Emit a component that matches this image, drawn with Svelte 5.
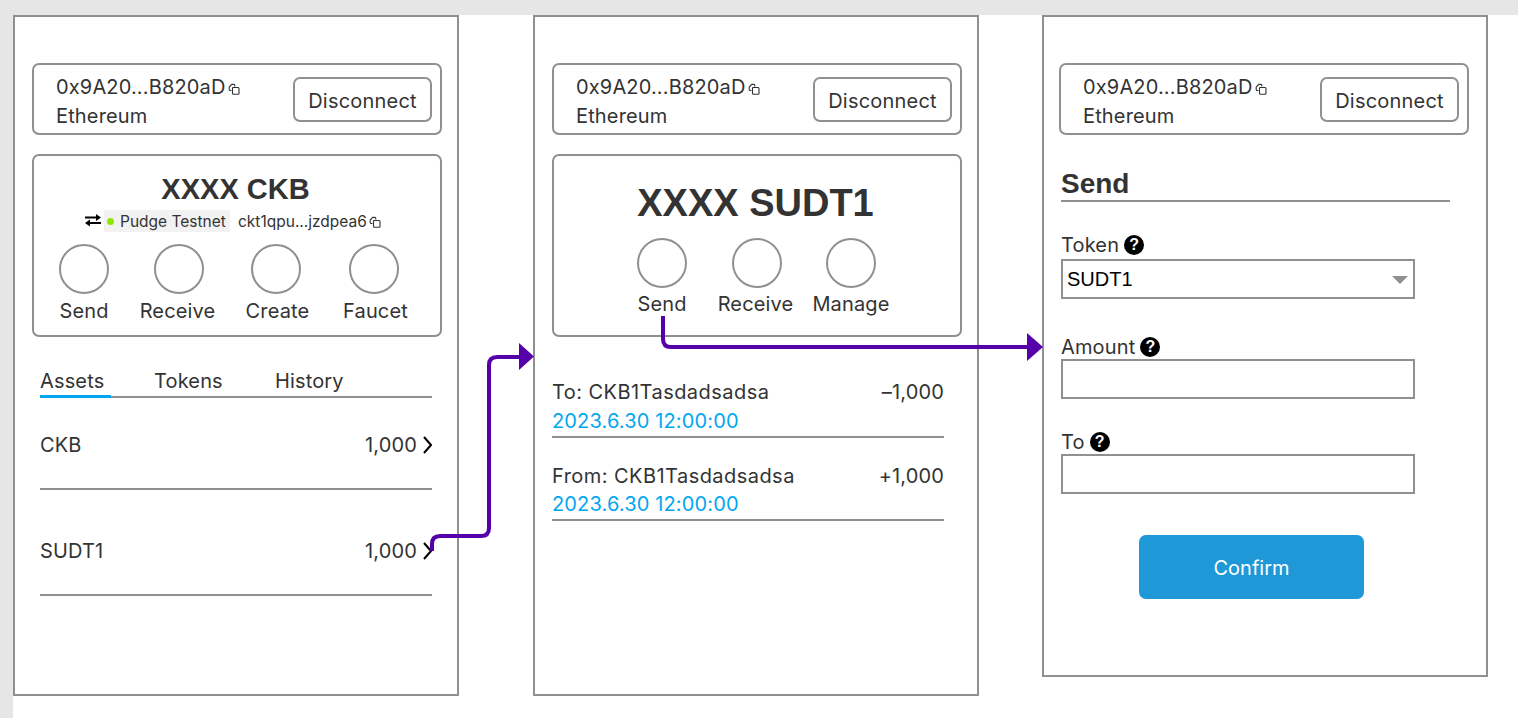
<script>
	const mainActions = ['Send', 'Receive', 'Create', 'Faucet'];
	const tokenActions = ['Send', 'Receive', 'Manage'];
	const tabs = ['Assets', 'Tokens', 'History'];
	const assets = [
		{ name: 'CKB', amount: '1,000' },
		{ name: 'SUDT1', amount: '1,000' }
	];
	const history = [
		{ who: 'To: CKB1Tasdadsadsa', amount: '–1,000', date: '2023.6.30 12:00:00' },
		{ who: 'From: CKB1Tasdadsadsa', amount: '+1,000', date: '2023.6.30 12:00:00' }
	];
</script>

{#snippet copyIcon()}
	<svg class="copy" viewBox="0 0 12 12" width="12" height="12" fill="none" stroke="#333" stroke-width="1.1">
		<path d="M3.5 7.5H2.2a1 1 0 0 1-1-1V4l2.6-2.6h2a1 1 0 0 1 1 1v1.2" />
		<path d="M5 4.500h5a1 1 0 0 1 1 1v4.700a1 1 0 0 1-1 1H5.500a1 1 0 0 1-1-1V5z" />
	</svg>
{/snippet}

{#snippet wallet()}
	<div class="wallet">
		<div class="address">
			<div class="line">0x9A20...B820aD{@render copyIcon()}</div>
			<div class="line">Ethereum</div>
		</div>
		<button class="disconnect">Disconnect</button>
	</div>
{/snippet}

{#snippet help()}
	<span class="help">?</span>
{/snippet}

<div class="board">
	<section class="panel">
		{@render wallet()}
		<div class="card">
			<h2 class="balance">XXXX CKB</h2>
			<div class="network">
				<svg class="swap" viewBox="0 0 16 16" width="16" height="16" fill="#000">
					<path d="M0 3.500h11V1l5 3.500-5 3.500V5.500H0z" />
					<path d="M16 9H5V6.500L0 10l5 3.500V11h11z" />
				</svg>
				<span class="pill"><i class="dot"></i>Pudge Testnet</span>
				<span class="ckb-address">ckt1qpu...jzdpea6{@render copyIcon()}</span>
			</div>
			<div class="actions four">
				{#each mainActions as action}
					<div class="action"><span class="circle"></span><span class="action-label">{action}</span></div>
				{/each}
			</div>
		</div>
		<div class="tabs">
			{#each tabs as tab, i}
				<span class="tab" class:active={i === 0}>{tab}</span>
			{/each}
		</div>
		{#each assets as asset}
			<div class="asset">
				<span>{asset.name}</span>
				<span class="amount">
					{asset.amount}
					<svg viewBox="0 0 9 18" width="9" height="18" fill="none" stroke="#000" stroke-width="2"><path d="M1 1l7 8-7 8" /></svg>
				</span>
			</div>
		{/each}
	</section>

	<section class="panel second">
		{@render wallet()}
		<div class="card">
			<h2 class="balance large">XXXX SUDT1</h2>
			<div class="actions three">
				{#each tokenActions as action}
					<div class="action"><span class="circle"></span><span class="action-label">{action}</span></div>
				{/each}
			</div>
		</div>
		<div class="history">
			{#each history as item}
				<div class="record">
					<div class="record-top"><span class="who">{item.who}</span><span>{item.amount}</span></div>
					<div class="date">{item.date}</div>
				</div>
			{/each}
		</div>
	</section>

	<section class="panel third">
		{@render wallet()}
		<form class="send">
			<h2 class="send-title">Send</h2>
			<div class="field first">
				<span class="label">Token {@render help()}</span>
				<div class="select-wrap">
					<select class="box">
						<option>SUDT1</option>
					</select>
				</div>
			</div>
			<div class="field amount-field">
				<span class="label">Amount {@render help()}</span>
				<input class="box" />
			</div>
			<div class="field">
				<span class="label">To {@render help()}</span>
				<input class="box" />
			</div>
			<button type="button" class="confirm">Confirm</button>
		</form>
	</section>

	<svg class="arrows" width="1518" height="718" fill="none" stroke="#5500a8" stroke-width="4">
		<path d="M432 551v-7q0-8 8-8h41q8 0 8-8V365q0-8 8-8h24" />
		<path d="M519 343l15 13.500-15 13.500z" fill="#5500a8" stroke="none" />
		<path d="M663 316v23q0 8 8 8h358" />
		<path d="M1027 333l16 14-16 14z" fill="#5500a8" stroke="none" />
	</svg>
</div>

<style>
	:global(body) {
		background: #fff;
	}

	.board {
		position: relative;
		box-sizing: border-box;
		display: flex;
		align-items: flex-start;
		width: 1518px;
		height: 718px;
		overflow: hidden;
		border-top: 15px solid #e6e6e6;
		border-left: 13px solid #e6e6e6;
		font-family: Inter, 'Liberation Sans', sans-serif;
		font-size: 20px;
		letter-spacing: 0.15px;
		color: #333;
	}

	.panel {
		box-sizing: border-box;
		flex: none;
		width: 446px;
		height: 681px;
		padding: 46px 15px 0 17px;
		border: 2px solid #909090;
		background: #fff;
	}

	.second {
		margin-left: 74px;
	}

	.third {
		margin-left: 63px;
		height: 662px;
		padding-left: 15px;
		padding-right: 17px;
	}

	.wallet {
		box-sizing: border-box;
		display: flex;
		justify-content: space-between;
		align-items: center;
		height: 72px;
		padding: 0 8px 0 22px;
		border: 2px solid #909090;
		border-radius: 7px;
	}

	.address {
		padding-top: 6px;
	}

	.line {
		line-height: 29px;
	}

	.copy {
		margin-left: 2px;
		vertical-align: -1px;
	}

	.disconnect {
		width: 139px;
		height: 45px;
		padding: 4px 0 0;
		border: 2px solid #909090;
		border-radius: 7px;
		background: #fff;
		font: inherit;
		letter-spacing: 0.2px;
		color: #333;
	}

	.card {
		box-sizing: border-box;
		height: 183px;
		margin-top: 19px;
		border: 2px solid #909090;
		border-radius: 7px;
		text-align: center;
	}

	.balance {
		margin: 16px 3px 0 0;
		font-family: 'Liberation Sans', sans-serif;
		font-size: 29px;
		line-height: 34px;
		font-weight: 700;
		letter-spacing: 0;
	}

	.balance.large {
		margin-top: 25px;
		margin-right: 3px;
		font-size: 38px;
		line-height: 44px;
	}

	.network {
		display: flex;
		align-items: center;
		height: 22px;
		margin: 4px 0 0 51px;
		font-size: 15.500px;
		letter-spacing: 0;
	}

	.swap {
		margin-right: 3px;
	}

	.pill {
		display: flex;
		align-items: center;
		box-sizing: border-box;
		width: 126px;
		height: 22px;
		padding-left: 3px;
		background: #f2f2f2;
		white-space: nowrap;
	}

	.dot {
		width: 7px;
		height: 7px;
		margin-right: 6px;
		border-radius: 50%;
		background: #8fe800;
	}

	.ckb-address {
		margin-left: 8px;
		white-space: nowrap;
	}

	.actions {
		display: grid;
		margin-top: 12px;
	}

	.four {
		grid-template-columns: 98px 91px 104px 92px;
		margin-left: 1px;
	}

	.four .action:nth-child(2) .action-label {
		margin-right: 2px;
	}

	.four .action:nth-child(n + 3) .action-label {
		margin-left: 3px;
	}

	.three {
		grid-template-columns: repeat(3, 94.500px);
		justify-content: center;
		margin-top: 13px;
		margin-right: 1px;
	}

	.three .action:nth-child(2) .action-label {
		margin-right: 2px;
	}

	.action {
		display: flex;
		flex-direction: column;
		align-items: center;
		line-height: 24px;
		white-space: nowrap;
	}

	.circle {
		box-sizing: border-box;
		width: 50px;
		height: 50px;
		margin-bottom: 5px;
		border: 2px solid #909090;
		border-radius: 50%;
	}

	.three .circle {
		margin-bottom: 4px;
	}

	.tabs {
		box-sizing: border-box;
		display: flex;
		height: 32px;
		margin: 29px 10px 0 8px;
		border-bottom: 2px solid #909090;
		line-height: 30px;
	}

	.tab {
		box-sizing: border-box;
		width: 114px;
		height: 32px;
	}

	.tab:nth-child(2) {
		width: 121px;
	}

	.tab.active {
		width: 71px;
		margin-right: 43px;
		border-bottom: 3px solid #02a7f0;
	}

	.asset {
		box-sizing: border-box;
		display: flex;
		justify-content: space-between;
		align-items: flex-start;
		height: 92px;
		margin: 0 10px 0 8px;
		padding-top: 35px;
		border-bottom: 2px solid #909090;
		line-height: 24px;
	}

	.asset + .asset {
		height: 106px;
		padding-top: 49px;
	}

	.amount {
		display: flex;
		align-items: center;
		gap: 6px;
	}

	.history {
		margin: 18px 18px 0 0;
	}

	.record {
		box-sizing: border-box;
		height: 83px;
		padding-top: 23px;
		border-bottom: 2px solid #909090;
		line-height: 29px;
	}

	.record + .record {
		padding-top: 24px;
	}

	.record + .record .date {
		margin-top: -1px;
	}

	.record-top {
		display: flex;
		justify-content: space-between;
	}

	.who {
		letter-spacing: 0.45px;
	}

	.date {
		color: #02a7f0;
	}

	.send {
		display: flex;
		flex-direction: column;
		padding-left: 2px;
	}

	.send-title {
		box-sizing: border-box;
		width: 389px;
		height: 35px;
		margin: 32px 0 0;
		border-bottom: 2px solid #909090;
		font-family: 'Liberation Sans', sans-serif;
		font-size: 28px;
		line-height: 33px;
		font-weight: 700;
		letter-spacing: 0;
	}

	.field {
		display: flex;
		flex-direction: column;
		margin-top: 31px;
	}

	.amount-field {
		margin-top: 36px;
	}

	.label {
		display: flex;
		align-items: center;
		gap: 5px;
		height: 24px;
		line-height: 24px;
	}

	.help {
		display: inline-block;
		width: 20px;
		height: 20px;
		border-radius: 50%;
		background: #000;
		color: #fff;
		font-family: 'Liberation Sans', sans-serif;
		font-size: 16px;
		font-weight: 700;
		line-height: 20px;
		text-align: center;
	}

	.box {
		display: block;
		box-sizing: border-box;
		width: 354px;
		height: 40px;
		padding: 0 4px;
		border: 2px solid #909090;
		border-radius: 0;
		background: #fff;
		font-family: 'Liberation Sans', sans-serif;
		font-size: 20px;
		color: #000;
		appearance: none;
	}

	.select-wrap {
		position: relative;
		width: 354px;
		margin-top: 2px;
	}

	.select-wrap::after {
		content: '';
		position: absolute;
		right: 7px;
		top: 17px;
		border-left: 8px solid transparent;
		border-right: 8px solid transparent;
		border-top: 8px solid #909090;
	}

	.confirm {
		align-self: flex-start;
		width: 225px;
		height: 64px;
		margin: 41px 0 0 78px;
		padding: 2px 0 0;
		border: none;
		border-radius: 7px;
		background: #1e98d7;
		font: inherit;
		color: #fff;
	}

	.arrows {
		position: absolute;
		left: -13px;
		top: -15px;
		pointer-events: none;
	}
</style>
